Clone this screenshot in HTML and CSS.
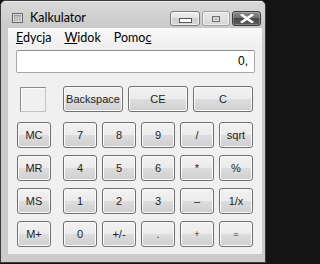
FILE: index.html
```html
<!DOCTYPE html>
<html>
<head>
<meta charset="utf-8">
<link rel="stylesheet" href="styles.css">
</head>
<body>
<div class="win">
  <div class="titlebar">
    <svg class="appicon" width="11" height="10" viewBox="0 0 11 10">
      <rect x="0.5" y="0.5" width="10" height="9" fill="#d8d8d8" stroke="#6a6a6a"/>
      <rect x="2" y="2" width="7" height="1.5" fill="#9a9a9a"/>
      <g fill="#8c8c8c">
        <rect x="2" y="4.5" width="1.5" height="1"/><rect x="4.5" y="4.5" width="1.5" height="1"/><rect x="7" y="4.5" width="1.5" height="1"/>
        <rect x="2" y="6.5" width="1.5" height="1"/><rect x="4.5" y="6.5" width="1.5" height="1"/><rect x="7" y="6.5" width="1.5" height="1"/>
      </g>
    </svg>
    <span class="title">Kalkulator</span>
    <div class="caps">
      <span class="cap min"><i></i></span>
      <span class="cap max"><i></i></span>
      <span class="cap close">
        <svg width="14" height="9" viewBox="0 0 14 9">
          <path d="M2 1 L12 8 M12 1 L2 8" stroke="#ffffff" stroke-width="2.6" stroke-linecap="square"/>
        </svg>
      </span>
    </div>
  </div>
  <div class="frame">
    <div class="menubar">
      <span class="mi"><u>E</u>dycja</span>
      <span class="mi"><u>W</u>idok</span>
      <span class="mi">Pomo<u>c</u></span>
    </div>
    <div class="client">
      <div class="display">0,</div>
      <div class="pad">
        <div class="memcol">
          <div class="memslot"><div class="memind"></div></div>
          <button class="key">MC</button>
          <button class="key">MR</button>
          <button class="key">MS</button>
          <button class="key">M+</button>
        </div>
        <div class="maincol">
          <div class="toprow">
            <button class="key wide">Backspace</button>
            <button class="key wide">CE</button>
            <button class="key wide">C</button>
          </div>
          <div class="grid">
            <button class="key">7</button>
            <button class="key">8</button>
            <button class="key">9</button>
            <button class="key">/</button>
            <button class="key">sqrt</button>
            <button class="key">4</button>
            <button class="key">5</button>
            <button class="key">6</button>
            <button class="key">*</button>
            <button class="key">%</button>
            <button class="key">1</button>
            <button class="key">2</button>
            <button class="key">3</button>
            <button class="key">&ndash;</button>
            <button class="key">1/x</button>
            <button class="key">0</button>
            <button class="key">+/-</button>
            <button class="key">.</button>
            <button class="key small">+</button>
            <button class="key small">=</button>
          </div>
        </div>
      </div>
    </div>
  </div>
</div>
</body>
</html>
```
FILE: styles.css
```css
html, body {
  margin: 0;
  padding: 0;
  background: #141414;
}
body {
  width: 270px;
  height: 264px;
  overflow: hidden;
}
.win {
  width: 266px;
  height: 263px;
  box-sizing: border-box;
  border: 1px solid #3a3a3a;
  border-radius: 6px 6px 0 0;
  background: #cbcbcb;
  overflow: hidden;
}
.titlebar {
  height: 27px;
  display: flex;
  align-items: center;
  background: linear-gradient(#d9d9d9, #c9c9c9);
  padding: 0 4px 0 11px;
  box-shadow: inset 0 1px 0 #eeeeee;
}
.appicon {
  display: block;
  margin-top: 6px;
}
.title {
  margin-left: 7px;
  margin-top: 6px;
  font-family: Lato, "Noto Sans", sans-serif;
  font-size: 12.5px;
  color: #000;
}
.caps {
  margin-left: auto;
  display: flex;
  gap: 2px;
  align-self: flex-start;
  margin-top: 10px;
}
.cap {
  height: 15px;
  box-sizing: border-box;
  border: 1px solid #7c7c7c;
  border-radius: 3px;
  display: flex;
  align-items: center;
  justify-content: center;
  background: linear-gradient(#efefef 0%, #e2e2e2 50%, #cfcfcf 50%, #d8d8d8 100%);
  box-shadow: inset 0 0 0 1px rgba(255,255,255,0.6);
}
.cap.min { width: 30px; }
.cap.max { width: 28px; border-color: #a0a0a0; background: linear-gradient(#e8e8e8, #d6d6d6); }
.cap.close {
  width: 29px;
  border-color: #3c3c3c;
  background: linear-gradient(#8a8a8a 0%, #6c6c6c 50%, #4a4a4a 50%, #5c5c5c 100%);
  box-shadow: inset 0 0 0 1px rgba(255,255,255,0.25);
}
.cap.min i {
  display: block;
  width: 11px;
  height: 3px;
  border: 1px solid #555;
  background: #fff;
  margin-top: 3px;
}
.cap.max i {
  display: block;
  width: 6px;
  height: 4px;
  border: 1px solid #6a6a6a;
  box-shadow: inset 0 0 0 1px #e0e0e0;
  background: #bdbdbd;
}
.close svg { display: block; }
.frame {
  padding: 0 3px 8px 7px;
}
.menubar {
  height: 19px;
  display: flex;
  align-items: center;
  padding-left: 8px;
  background: linear-gradient(#f9f9f9, #efefef);
  font-family: Lato, "Noto Sans", sans-serif;
  font-size: 12.5px;
  color: #000;
}
.mi {
  margin-right: 13px;
}
.client {
  height: 207px;
  box-sizing: border-box;
  background: #f0f0f0;
  padding-top: 3px;
}
.display {
  margin-left: 8px;
  width: 239px;
  height: 23px;
  box-sizing: border-box;
  border: 1px solid #a8a8a8;
  border-top-color: #8c8c8c;
  border-radius: 2px;
  background: #ffffff;
  text-align: right;
  padding-right: 6px;
  font-family: "Liberation Sans", sans-serif;
  font-size: 12px;
  line-height: 21px;
  color: #000;
}
.pad {
  display: flex;
  margin-top: 13px;
  margin-left: 9px;
}
.memcol {
  width: 34px;
  display: flex;
  flex-direction: column;
  gap: 7px;
  margin-right: 12px;
}
.memslot {
  height: 26px;
  margin-bottom: 3px;
}
.memind {
  margin: 1px 0 0 3px;
  width: 26px;
  height: 25px;
  box-sizing: border-box;
  border: 1px solid #c4c4c4;
  border-top-color: #8a8a8a;
  border-left-color: #8a8a8a;
  box-shadow: inset 1px 1px 0 #f8f8f8;
}
.maincol {
  display: flex;
  flex-direction: column;
}
.toprow {
  display: flex;
  gap: 5px;
  margin-bottom: 10px;
}
.grid {
  display: grid;
  grid-template-columns: repeat(5, 34px);
  grid-auto-rows: 26px;
  column-gap: 5px;
  row-gap: 7px;
}
.key {
  width: 34px;
  height: 26px;
  margin: 0;
  padding: 0;
  box-sizing: border-box;
  border: 1px solid #707070;
  border-radius: 3px;
  background: linear-gradient(#f2f2f2 0%, #ebebeb 50%, #dddddd 50%, #cfcfcf 100%);
  box-shadow: inset 0 0 0 1px #fbfbfb;
  font-family: "Liberation Sans", sans-serif;
  font-size: 11px;
  color: #1e1e1e;
  line-height: 24px;
  text-align: center;
}
.key.wide {
  width: 60px;
}
.key.small {
  font-size: 9px;
}
```
